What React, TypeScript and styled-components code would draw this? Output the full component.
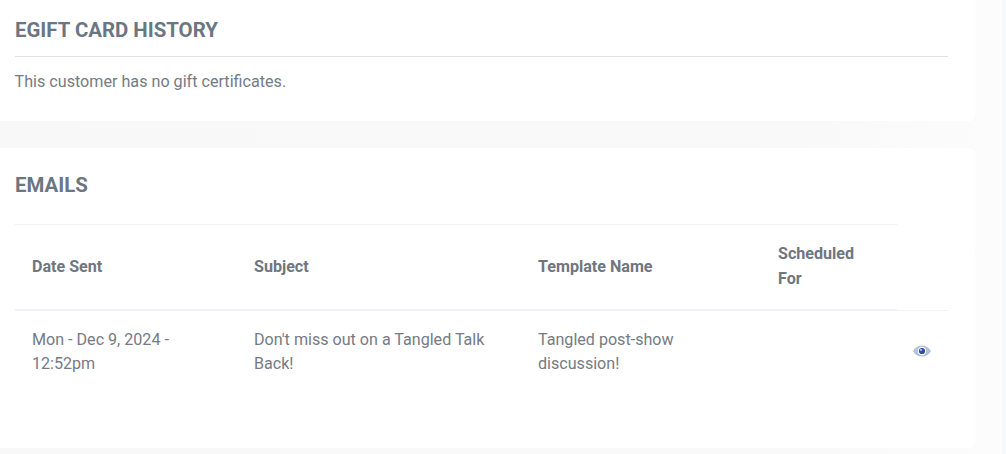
import { createGlobalStyle } from 'styled-components';
import styled from 'styled-components';

const GlobalStyle = createGlobalStyle`
  html, body {
    margin: 0;
    padding: 0;
    height: 454px;
    overflow: hidden;
    background: #ffffff;
    font-family: Roboto, "Liberation Sans", sans-serif;
    color: #757b85;
  }
`;

function EyeIcon() {
  return (
    <svg width="18" height="12" viewBox="0 0 18 12" aria-hidden="true">
      <path d="M0 6C2 2.4 5.2 0.4 9 0.4S16 2.4 18 6c-2 3.6-5.200 5.600-9 5.600S2 9.600 0 6Z" fill="#b3c0e0" />
      <circle cx="9" cy="6" r="4.200" fill="#ffffff" />
      <circle cx="9" cy="6" r="3.100" fill="#2f4fa8" />
      <circle cx="8" cy="5" r="1" fill="#c9d4ee" />
    </svg>
  );
}

function App() {
  return (
    <Page>
      <GlobalStyle />
      <Main>
        <Card>
          <Title>EGIFT CARD HISTORY</Title>
          <Rule />
          <Empty>This customer has no gift certificates.</Empty>
        </Card>
        <EmailsCard>
          <Title>EMAILS</Title>
          <Table>
            <colgroup>
              <col width="222" />
              <col width="284" />
              <col width="240" />
              <col width="136" />
              <col width="51" />
            </colgroup>
            <thead>
              <tr>
                <Th>Date Sent</Th>
                <Th>Subject</Th>
                <Th>Template Name</Th>
                <Th>Scheduled For</Th>
                <ActionTh />
              </tr>
            </thead>
            <tbody>
              <tr>
                <Td>Mon - Dec 9, 2024 - 12:52pm</Td>
                <Td>Don't miss out on a Tangled Talk Back!</Td>
                <Td>Tangled post-show discussion!</Td>
                <Td />
                <ActionTd>
                  <EyeIcon />
                </ActionTd>
              </tr>
            </tbody>
          </Table>
        </EmailsCard>
      </Main>
      <Track />
    </Page>
  );
}

export default App;

const Page = styled.div`
  display: flex;
  width: 1006px;
  height: 454px;
  overflow: hidden;
`;

const Main = styled.div`
  display: flex;
  flex-direction: column;
  gap: 27px;
  flex: none;
  width: 1002px;
  height: 454px;
  background: linear-gradient(90deg, #f8f8f8 0%, #f9f9f9 80%, #fcfcfc 100%);
`;

const Track = styled.div`
  flex: none;
  width: 4px;
  background: #f7f8fb;
`;

const Card = styled.section`
  box-sizing: border-box;
  width: 975px;
  height: 121px;
  padding: 19px 27px 0 15px;
  background: #ffffff;
  border-radius: 0 0 6px 0;
`;

const EmailsCard = styled(Card)`
  height: 300px;
  padding-top: 26px;
  border-radius: 0 6px 6px 0;
`;

const Title = styled.h2`
  margin: 0;
  font-size: 20.4px;
  line-height: 22px;
  font-weight: 700;
  color: #6b7683;
`;

const Rule = styled.hr`
  margin: 15px 0 0;
  border: 0;
  border-top: 1px solid #dee2e6;
`;

const Empty = styled.p`
  margin: 14px 0 0 -0.5px;
  font-size: 16.15px;
  line-height: 21px;
  color: #757b85;
`;

const Table = styled.table`
  table-layout: fixed;
  width: 933px;
  margin-top: 28px;
  border-collapse: separate;
  border-spacing: 0;
  font-size: 16.1px;
`;

const Th = styled.th`
  box-sizing: border-box;
  height: 87px;
  padding: 0 17px 2px;
  border-top: 1px solid #eff2f7;
  border-bottom: 2px solid #eff2f7;
  font-weight: 700;
  line-height: 25px;
  text-align: left;
  color: #6f7680;
`;

const ActionTh = styled.th`
  border-bottom: 1px solid #eff2f7;
`;

const Td = styled.td`
  padding: 17px 17px 16px;
  line-height: 24px;
  vertical-align: top;
  color: #757b85;
`;

const ActionTd = styled.td`
  padding: 0 0 1px 16px;
  vertical-align: middle;
  line-height: 0;
`;
